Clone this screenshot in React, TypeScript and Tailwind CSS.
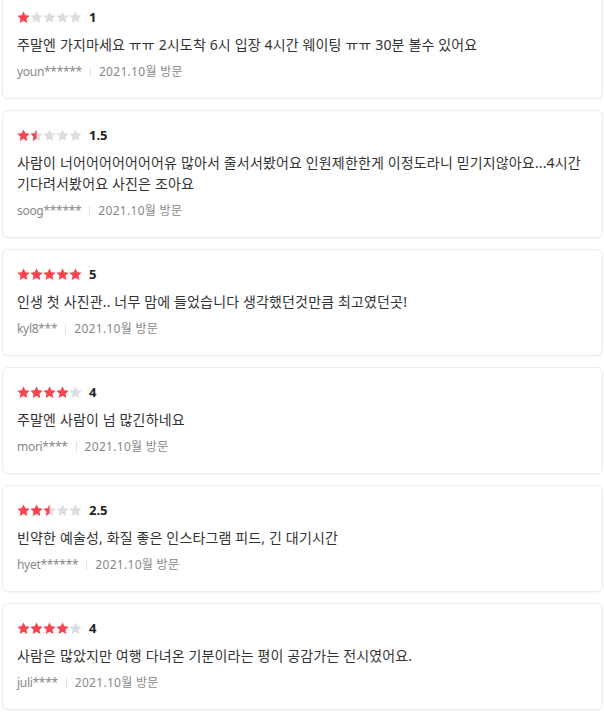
import React from "react";

interface Review {
  id: number;
  rating: number;
  text: string;
  user: string;
  visit: string;
}

const reviews: Review[] = [
  { id: 1, rating: 1, text: "주말엔 가지마세요 ㅠㅠ 2시도착 6시 입장 4시간 웨이팅 ㅠㅠ 30분 볼수 있어요", user: "youn******", visit: "2021.10월 방문" },
  { id: 2, rating: 1.5, text: "사람이 너어어어어어어어유 많아서 줄서서봤어요 인원제한한게 이정도라니 믿기지않아요...4시간 기다려서봤어요 사진은 조아요", user: "soog******", visit: "2021.10월 방문" },
  { id: 3, rating: 5, text: "인생 첫 사진관.. 너무 맘에 들었습니다 생각했던것만큼 최고였던곳!", user: "kyl8***", visit: "2021.10월 방문" },
  { id: 4, rating: 4, text: "주말엔 사람이 넘 많긴하네요", user: "mori****", visit: "2021.10월 방문" },
  { id: 5, rating: 2.5, text: "빈약한 예술성, 화질 좋은 인스타그램 피드, 긴 대기시간", user: "hyet******", visit: "2021.10월 방문" },
  { id: 6, rating: 4, text: "사람은 많았지만 여행 다녀온 기분이라는 평이 공감가는 전시였어요.", user: "juli****", visit: "2021.10월 방문" },
];

const STAR = "M6.5 0.4l1.8 3.95 4.3 0.45-3.2 2.9 0.9 4.2L6.5 9.8 2.7 11.9l0.9-4.2L0.4 4.8l4.3-0.45z";

// one star, fill = 0, 0.5 or 1
const Star = ({ fill, idx }: { fill: number; idx: string }) => (
  <svg width="13" height="13" viewBox="0 0 13 13" className="block">
    <defs>
      <clipPath id={`half-${idx}`}>
        <rect x="0" y="0" width="6.5" height="13" />
      </clipPath>
    </defs>
    <path d={STAR} fill="#dcdde1" />
    {fill === 1 && <path d={STAR} fill="#f7444e" />}
    {fill === 0.5 && <path d={STAR} fill="#f7444e" clipPath={`url(#half-${idx})`} />}
  </svg>
);

const Stars = ({ rating, id }: { rating: number; id: number }) => (
  <div className="flex items-center">
    {[0, 1, 2, 3, 4].map((i) => {
      const f = rating >= i + 1 ? 1 : rating >= i + 0.5 ? 0.5 : 0;
      return <Star key={i} fill={f} idx={`${id}-${i}`} />;
    })}
  </div>
);

const ReviewCard = ({ r }: { r: Review }) => (
  <div className="ml-[2px] mr-[1px] bg-white border border-[#ececec] rounded-[6px] shadow-[0_1px_2px_rgba(0,0,0,0.04)] px-[14px] pt-[15px] pb-[17px]">
    <div className="flex items-center h-[18px] gap-[7px]">
      <Stars rating={r.rating} id={r.id} />
      <span className="text-[13px] font-bold text-[#222] leading-[18px]">{r.rating}</span>
    </div>
    <p className="mt-2 text-[14px] leading-[21px] text-[#333] tracking-[0.15px]">{r.text}</p>
    <div className="mt-2 flex items-center h-[18px] text-[12px] text-[#888]">
      <span className="tracking-[-0.3px]">{r.user}</span>
      <span className="mx-[8px] w-px h-[10px] bg-[#e2e2e2]" />
      <span className="tracking-[0.3px]">{r.visit}</span>
    </div>
  </div>
);

export default function App() {
  return (
    <main
      className="bg-white min-h-screen overflow-hidden"
      style={{ fontFamily: '"Noto Sans", "Noto Sans CJK KR", sans-serif' }}
    >
      <div className="-mt-[8px] flex flex-col gap-[11px]">
        {reviews.map((r) => (
          <ReviewCard key={r.id} r={r} />
        ))}
      </div>
    </main>
  );
}
